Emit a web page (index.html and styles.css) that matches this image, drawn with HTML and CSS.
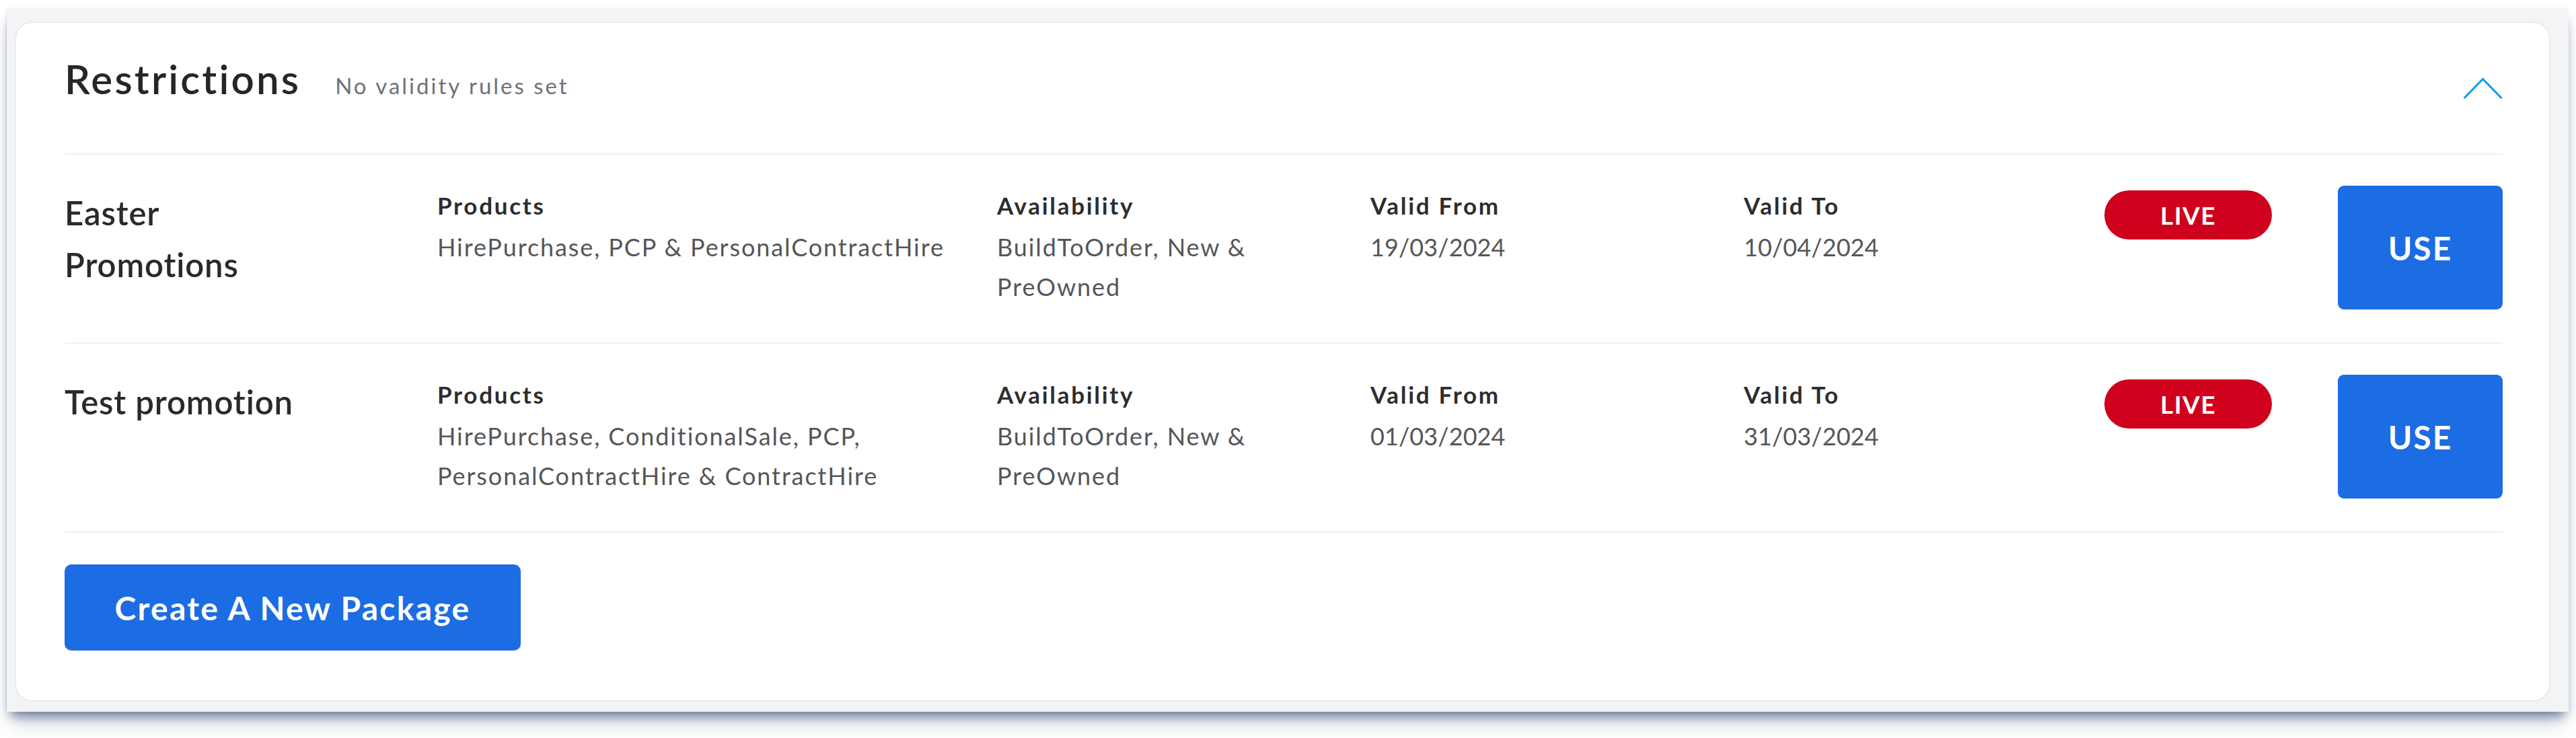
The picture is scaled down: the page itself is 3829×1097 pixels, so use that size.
FILE: index.html
```html
<!DOCTYPE html>
<html lang="en">
<head>
<meta charset="utf-8">
<title>Restrictions</title>
<link rel="stylesheet" href="styles.css">
</head>
<body>
<div class="panel">
  <div class="card">
    <div class="header">
      <div class="title-group">
        <h2 class="title">Restrictions</h2>
        <span class="subtitle">No validity rules set</span>
      </div>
      <svg class="chevron" width="59" height="32" viewBox="0 0 59 32" aria-hidden="true">
        <polyline points="1.5,31 29.5,2.5 57.5,31" fill="none" stroke="#1a9fe9" stroke-width="3.2"/>
      </svg>
    </div>

    <div class="row">
      <div class="name">Easter Promotions</div>
      <div class="cell">
        <div class="label">Products</div>
        <div class="value">HirePurchase, PCP &amp; PersonalContractHire</div>
      </div>
      <div class="cell narrow">
        <div class="label">Availability</div>
        <div class="value">BuildToOrder, New &amp; PreOwned</div>
      </div>
      <div class="cell">
        <div class="label">Valid From</div>
        <div class="value date">19/03/2024</div>
      </div>
      <div class="cell">
        <div class="label">Valid To</div>
        <div class="value date">10/04/2024</div>
      </div>
      <div class="status"><span class="badge">LIVE</span></div>
      <button class="use-btn">USE</button>
    </div>

    <div class="row">
      <div class="name">Test promotion</div>
      <div class="cell">
        <div class="label">Products</div>
        <div class="value">HirePurchase, ConditionalSale, PCP, PersonalContractHire &amp; ContractHire</div>
      </div>
      <div class="cell narrow">
        <div class="label">Availability</div>
        <div class="value">BuildToOrder, New &amp; PreOwned</div>
      </div>
      <div class="cell">
        <div class="label">Valid From</div>
        <div class="value date">01/03/2024</div>
      </div>
      <div class="cell">
        <div class="label">Valid To</div>
        <div class="value date">31/03/2024</div>
      </div>
      <div class="status"><span class="badge">LIVE</span></div>
      <button class="use-btn">USE</button>
    </div>

    <div class="footer">
      <button class="create-btn">Create A New Package</button>
    </div>
  </div>
</div>
</body>
</html>
```
FILE: styles.css
```css
* { box-sizing: border-box; }

html, body {
  margin: 0;
  padding: 0;
  background: #ffffff;
}

body {
  font-family: Lato, "Open Sans", "Liberation Sans", sans-serif;
  color: #2b2b2b;
  min-height: 1097px;
}

.panel {
  margin: 12px 11px 0 10px;
  padding: 20px 27px 15px 12px;
  background: #f3f4f5;
  box-shadow:
    -1px 0 2px rgba(0, 0, 0, 0.08),
    0 12px 16px -6px rgba(30, 50, 100, 0.6),
    0 24px 30px -10px rgba(60, 80, 130, 0.25);
}

.card {
  background: #ffffff;
  border: 2px solid #e8ebef;
  border-radius: 26px;
  padding: 0 69px 74px 72px;
}

.header {
  display: flex;
  justify-content: space-between;
  align-items: flex-start;
  padding: 53px 0 81px;
  border-bottom: 2px solid #eeeff1;
}

.title-group {
  display: flex;
  align-items: baseline;
  gap: 51px;
}

.title {
  margin: 0;
  font-size: 60px;
  line-height: 60px;
  font-weight: 600;
  letter-spacing: 3.2px;
  color: #262626;
}

.subtitle {
  font-size: 33px;
  letter-spacing: 3px;
  color: #6d7179;
}

.chevron {
  display: block;
  margin-top: 28px;
}

.row {
  display: grid;
  grid-template-columns: 554px 832px 555px 555px 536px 1fr 245px;
  align-items: start;
  padding: 46px 0 49px;
  border-bottom: 2px solid #eeeff1;
}

.name {
  max-width: 380px;
  font-size: 49px;
  line-height: 77px;
  font-weight: 600;
  letter-spacing: 0.9px;
  color: #2a2a2a;
  margin-top: 2px;
}

.cell {
  padding-right: 30px;
}

.cell.narrow {
  padding-right: 120px;
}

.label {
  font-size: 35px;
  line-height: 58px;
  font-weight: 700;
  letter-spacing: 2.7px;
  color: #2d2d2d;
  margin-bottom: 4px;
}

.value {
  font-size: 36px;
  line-height: 59px;
  letter-spacing: 1.9px;
  color: #555659;
}

.value.date {
  letter-spacing: 0.1px;
}

.status {
  padding-top: 7px;
}

.badge {
  display: inline-flex;
  align-items: center;
  justify-content: center;
  width: 249px;
  height: 73px;
  border-radius: 37px;
  background: #cf011c;
  color: #ffffff;
  font-size: 37px;
  font-weight: 700;
  letter-spacing: 1.5px;
}

.use-btn {
  width: 245px;
  height: 184px;
  border: none;
  border-radius: 9px;
  background: #1c6ce3;
  color: #ffffff;
  font-family: inherit;
  font-size: 48px;
  font-weight: 700;
  letter-spacing: 2px;
  padding: 0;
}

.footer {
  padding-top: 47px;
}

.create-btn {
  width: 678px;
  height: 128px;
  border: none;
  border-radius: 10px;
  background: #1c6ce3;
  color: #ffffff;
  font-family: inherit;
  font-size: 48px;
  font-weight: 700;
  letter-spacing: 2.3px;
  padding: 0;
}
```
